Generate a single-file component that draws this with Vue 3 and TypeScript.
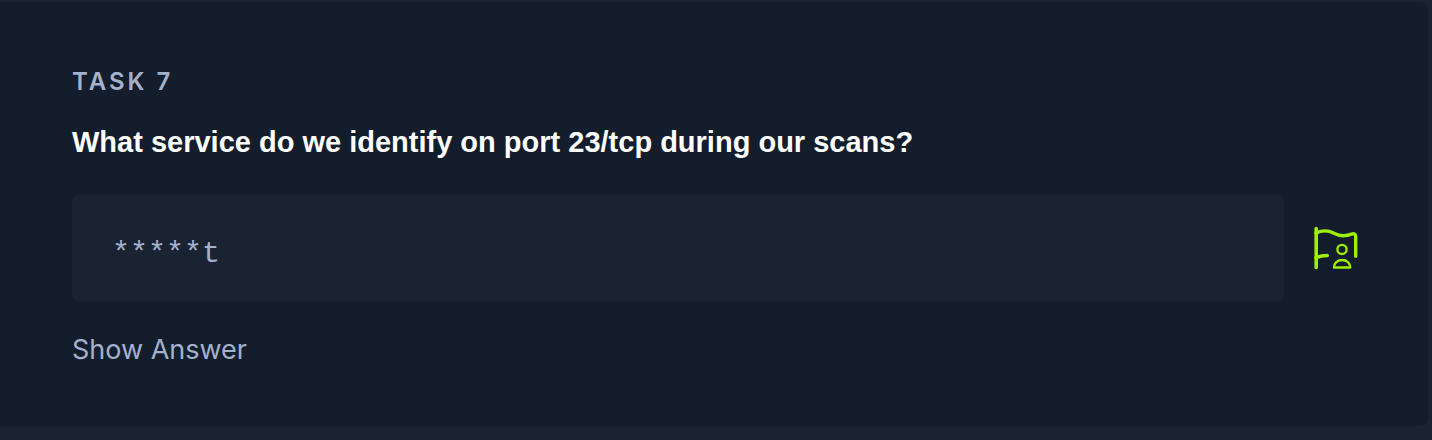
<script setup lang="ts">
import { ref } from 'vue'

const flag = ref('')
</script>

<template>
  <main class="page">
    <section class="task">
      <p class="eyebrow">TASK 7</p>
      <label class="question" for="flag">What service do we identify on port 23/tcp during our scans?</label>
      <div class="answer">
        <input id="flag" v-model="flag" class="field" type="text" placeholder="*****t" autocomplete="off" />
        <button class="owned" type="button" aria-label="Submit flag">
          <svg viewBox="0 0 48 48" fill="none" stroke="currentColor" stroke-linecap="round" stroke-linejoin="round">
            <path d="M4.200 4.500V43.500" stroke-width="3.600" />
            <path
              d="M4 9C10 6.200 16.500 6.400 22 9.200C27.500 12.200 33 12.600 39.500 10.200C42 9.300 43.700 9.800 43.700 12.200V32.200M4 33.600C7.500 32.200 11 31.500 15.300 31.500"
              stroke-width="3.400"
            />
            <circle cx="30" cy="25.400" r="4.600" stroke-width="2.300" />
            <path d="M21.900 43.500H38.300C38.300 38.900 34.700 36 30.100 36S21.900 38.900 21.900 43.500Z" stroke-width="2.300" />
          </svg>
        </button>
      </div>
      <button class="reveal" type="button">Show Answer</button>
    </section>
  </main>
</template>

<style>
body {
  margin: 0;
  background: #1a2332;
}
</style>

<style scoped>
.page {
  padding: 2px 4px 14px 0;
  font-family: Inter, "Liberation Sans", sans-serif;
}

.task {
  display: flex;
  flex-direction: column;
  align-items: flex-start;
  padding: 64px 68px 58px 72px;
  border-radius: 0 8px 8px 0;
  background: #141d2b;
  color: #a4b1cd;
}

.eyebrow {
  margin: 0;
  font-size: 24px;
  font-weight: 600;
  line-height: 32px;
  letter-spacing: 3px;
}

.question {
  margin-top: 24px;
  color: #fff;
  font-family: "Liberation Sans", Arial, sans-serif;
  font-size: 29px;
  font-weight: 700;
  line-height: 40px;
}

.answer {
  display: flex;
  align-items: center;
  align-self: stretch;
  gap: 28px;
  margin-top: 32px;
}

.field {
  flex: 1;
  min-width: 0;
  height: 108px;
  box-sizing: border-box;
  padding: 12px 40px 0;
  border: 0;
  border-radius: 8px;
  outline: 0;
  background: #1a2332;
  color: #a4b1cd;
  font: 30px "Liberation Mono", monospace;
}

.field::placeholder {
  color: #a4b1cd;
  opacity: 1;
}

.owned {
  width: 48px;
  height: 48px;
  padding: 0;
  border: 0;
  background: none;
  color: #9fef00;
  cursor: pointer;
}

.owned svg {
  display: block;
  width: 100%;
  height: 100%;
}

.reveal {
  margin-top: 30px;
  padding: 0;
  border: 0;
  background: none;
  color: inherit;
  font: 27px/36px Inter, "Liberation Sans", sans-serif;
  cursor: pointer;
}
</style>
